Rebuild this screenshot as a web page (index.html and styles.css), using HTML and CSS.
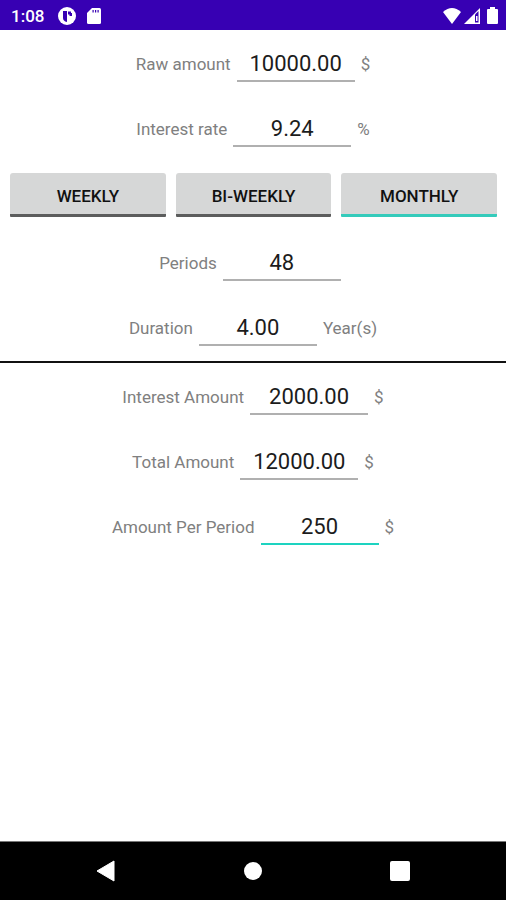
FILE: index.html
```html
<!DOCTYPE html>
<html lang="en">
<head>
<meta charset="utf-8">
<meta name="viewport" content="width=device-width, initial-scale=1">
<title>Loan calculator</title>
<link rel="stylesheet" href="styles.css">
</head>
<body>
<header class="status">
  <span class="clock">1:08</span>
  <svg class="app-icon" width="18" height="18" viewBox="0 0 18 18"><circle cx="9" cy="9" r="9" fill="#fff"/><path d="M5 4h4v11Q5 14 5 11z" fill="#3700b3"/><path d="M10 4.500h3V6h1v3h-2.500V7.500H10z" fill="#3700b3"/></svg>
  <svg width="14" height="16" viewBox="0 0 14 16"><path d="M5 0h7.500Q14 0 14 1.500v13Q14 16 12.500 16h-11Q0 16 0 14.500V5z" fill="#fff"/><path d="M5.500 2h1.200v2.500H5.500zM8 2h1.200v2.500H8zM10.500 2h1.200v2.500h-1.200z" fill="#3700b3"/></svg>
  <span class="signals">
    <svg width="18" height="16" viewBox="0 0 18 16"><path d="M0 4Q9-4 18 4L9 16z" fill="#fff"/></svg>
    <svg width="16" height="16" viewBox="0 0 16 16"><path d="M16 0v16H0z" fill="#fff"/><path d="M11 6.500l3.500-3.500v11.500H11z" fill="#3700b3"/><path d="M12 8h1.500v5H12z" fill="#fff"/></svg>
    <svg class="battery" width="11" height="17" viewBox="0 0 11 17"><path d="M3 0h5v2h2q1 0 1 1v13q0 1-1 1H1q-1 0-1-1V3q0-1 1-1h2z" fill="#fff"/></svg>
  </span>
</header>
<main>
  <section class="group">
    <div class="row"><label for="raw">Raw amount</label><input id="raw" type="text" inputmode="decimal" value="10000.00"><span>$</span></div>
    <div class="row"><label for="rate">Interest rate</label><input id="rate" type="text" inputmode="decimal" value="9.24"><span>%</span></div>
    <div class="toggles">
      <button type="button" aria-pressed="false">WEEKLY</button>
      <button type="button" aria-pressed="false">BI-WEEKLY</button>
      <button type="button" aria-pressed="true">MONTHLY</button>
    </div>
    <div class="row"><label for="periods">Periods</label><input id="periods" type="text" inputmode="numeric" value="48"></div>
    <div class="row"><label for="duration">Duration</label><input id="duration" type="text" inputmode="decimal" value="4.00"><span>Year(s)</span></div>
  </section>
  <section class="group results">
    <div class="row"><label for="interest">Interest Amount</label><input id="interest" type="text" inputmode="decimal" value="2000.00"><span>$</span></div>
    <div class="row"><label for="total">Total Amount</label><input id="total" type="text" inputmode="decimal" value="12000.00"><span>$</span></div>
    <div class="row"><label for="per">Amount Per Period</label><input id="per" class="active" type="text" inputmode="decimal" value="250"><span>$</span></div>
  </section>
</main>
<nav class="system">
  <button type="button" aria-label="Back"><svg width="20" height="22" viewBox="0 0 20 22"><path d="M18 1v20L1 11z" fill="#fff" stroke="#fff" stroke-linejoin="round"/></svg></button>
  <button type="button" aria-label="Home"><svg width="20" height="20" viewBox="0 0 20 20"><circle cx="10" cy="10" r="9" fill="#fff"/></svg></button>
  <button type="button" aria-label="Recent apps"><svg width="20" height="20" viewBox="0 0 20 20"><rect width="20" height="20" rx="2" fill="#fff"/></svg></button>
</nav>
</body>
</html>
```
FILE: styles.css
```css
* {
  box-sizing: border-box;
}

body {
  margin: 0;
  min-height: 100vh;
  display: flex;
  flex-direction: column;
  background: #fff;
  font-family: Roboto, sans-serif;
}

svg {
  display: block;
}

.status {
  display: flex;
  align-items: center;
  height: 30px;
  padding: 1px 8px 0 11px;
  background: #3700b3;
  color: #fff;
}

.clock {
  font-size: 17px;
  font-weight: 500;
}

.app-icon {
  margin: 0 11px 0 14px;
}

.signals {
  display: flex;
  align-items: center;
  gap: 3px;
  margin-left: auto;
}

.battery {
  margin-left: 4px;
}

main {
  flex: 1;
}

.group {
  padding: 1px 0;
}

.results {
  border-top: 2px solid #111;
}

.row {
  display: flex;
  align-items: center;
  justify-content: center;
  height: 65px;
  color: #808080;
  font-size: 17px;
  font-weight: 400;
}

.row input {
  width: 118px;
  height: 36px;
  margin: 0 6px;
  padding: 2px 0 0;
  border: 0;
  border-bottom: 2px solid #b0b0b0;
  outline: 0;
  background: none;
  color: #1c1c1c;
  font: 400 22px Roboto, sans-serif;
  text-align: center;
}

.row .active {
  border-color: #1dd3c0;
}

.toggles {
  display: grid;
  grid-template-columns: repeat(3, 1fr);
  gap: 10px;
  padding: 12px 9px 13px 10px;
}

.toggles button {
  height: 44px;
  padding: 4px 0 0;
  border: 0;
  border-bottom: 3px solid #5c5d5d;
  border-radius: 3px 3px 1px 1px;
  background: #d6d7d7;
  color: #111;
  font: 500 17px Roboto, sans-serif;
}

.toggles button[aria-pressed="true"] {
  border-color: #35cbbb;
}

.system {
  display: flex;
  justify-content: space-between;
  align-items: center;
  height: 59px;
  padding: 0 86px;
  border-top: 1px solid #777;
  background: #000;
}

.system button {
  display: grid;
  place-items: center;
  width: 40px;
  height: 40px;
  padding: 0;
  border: 0;
  background: none;
}
```
